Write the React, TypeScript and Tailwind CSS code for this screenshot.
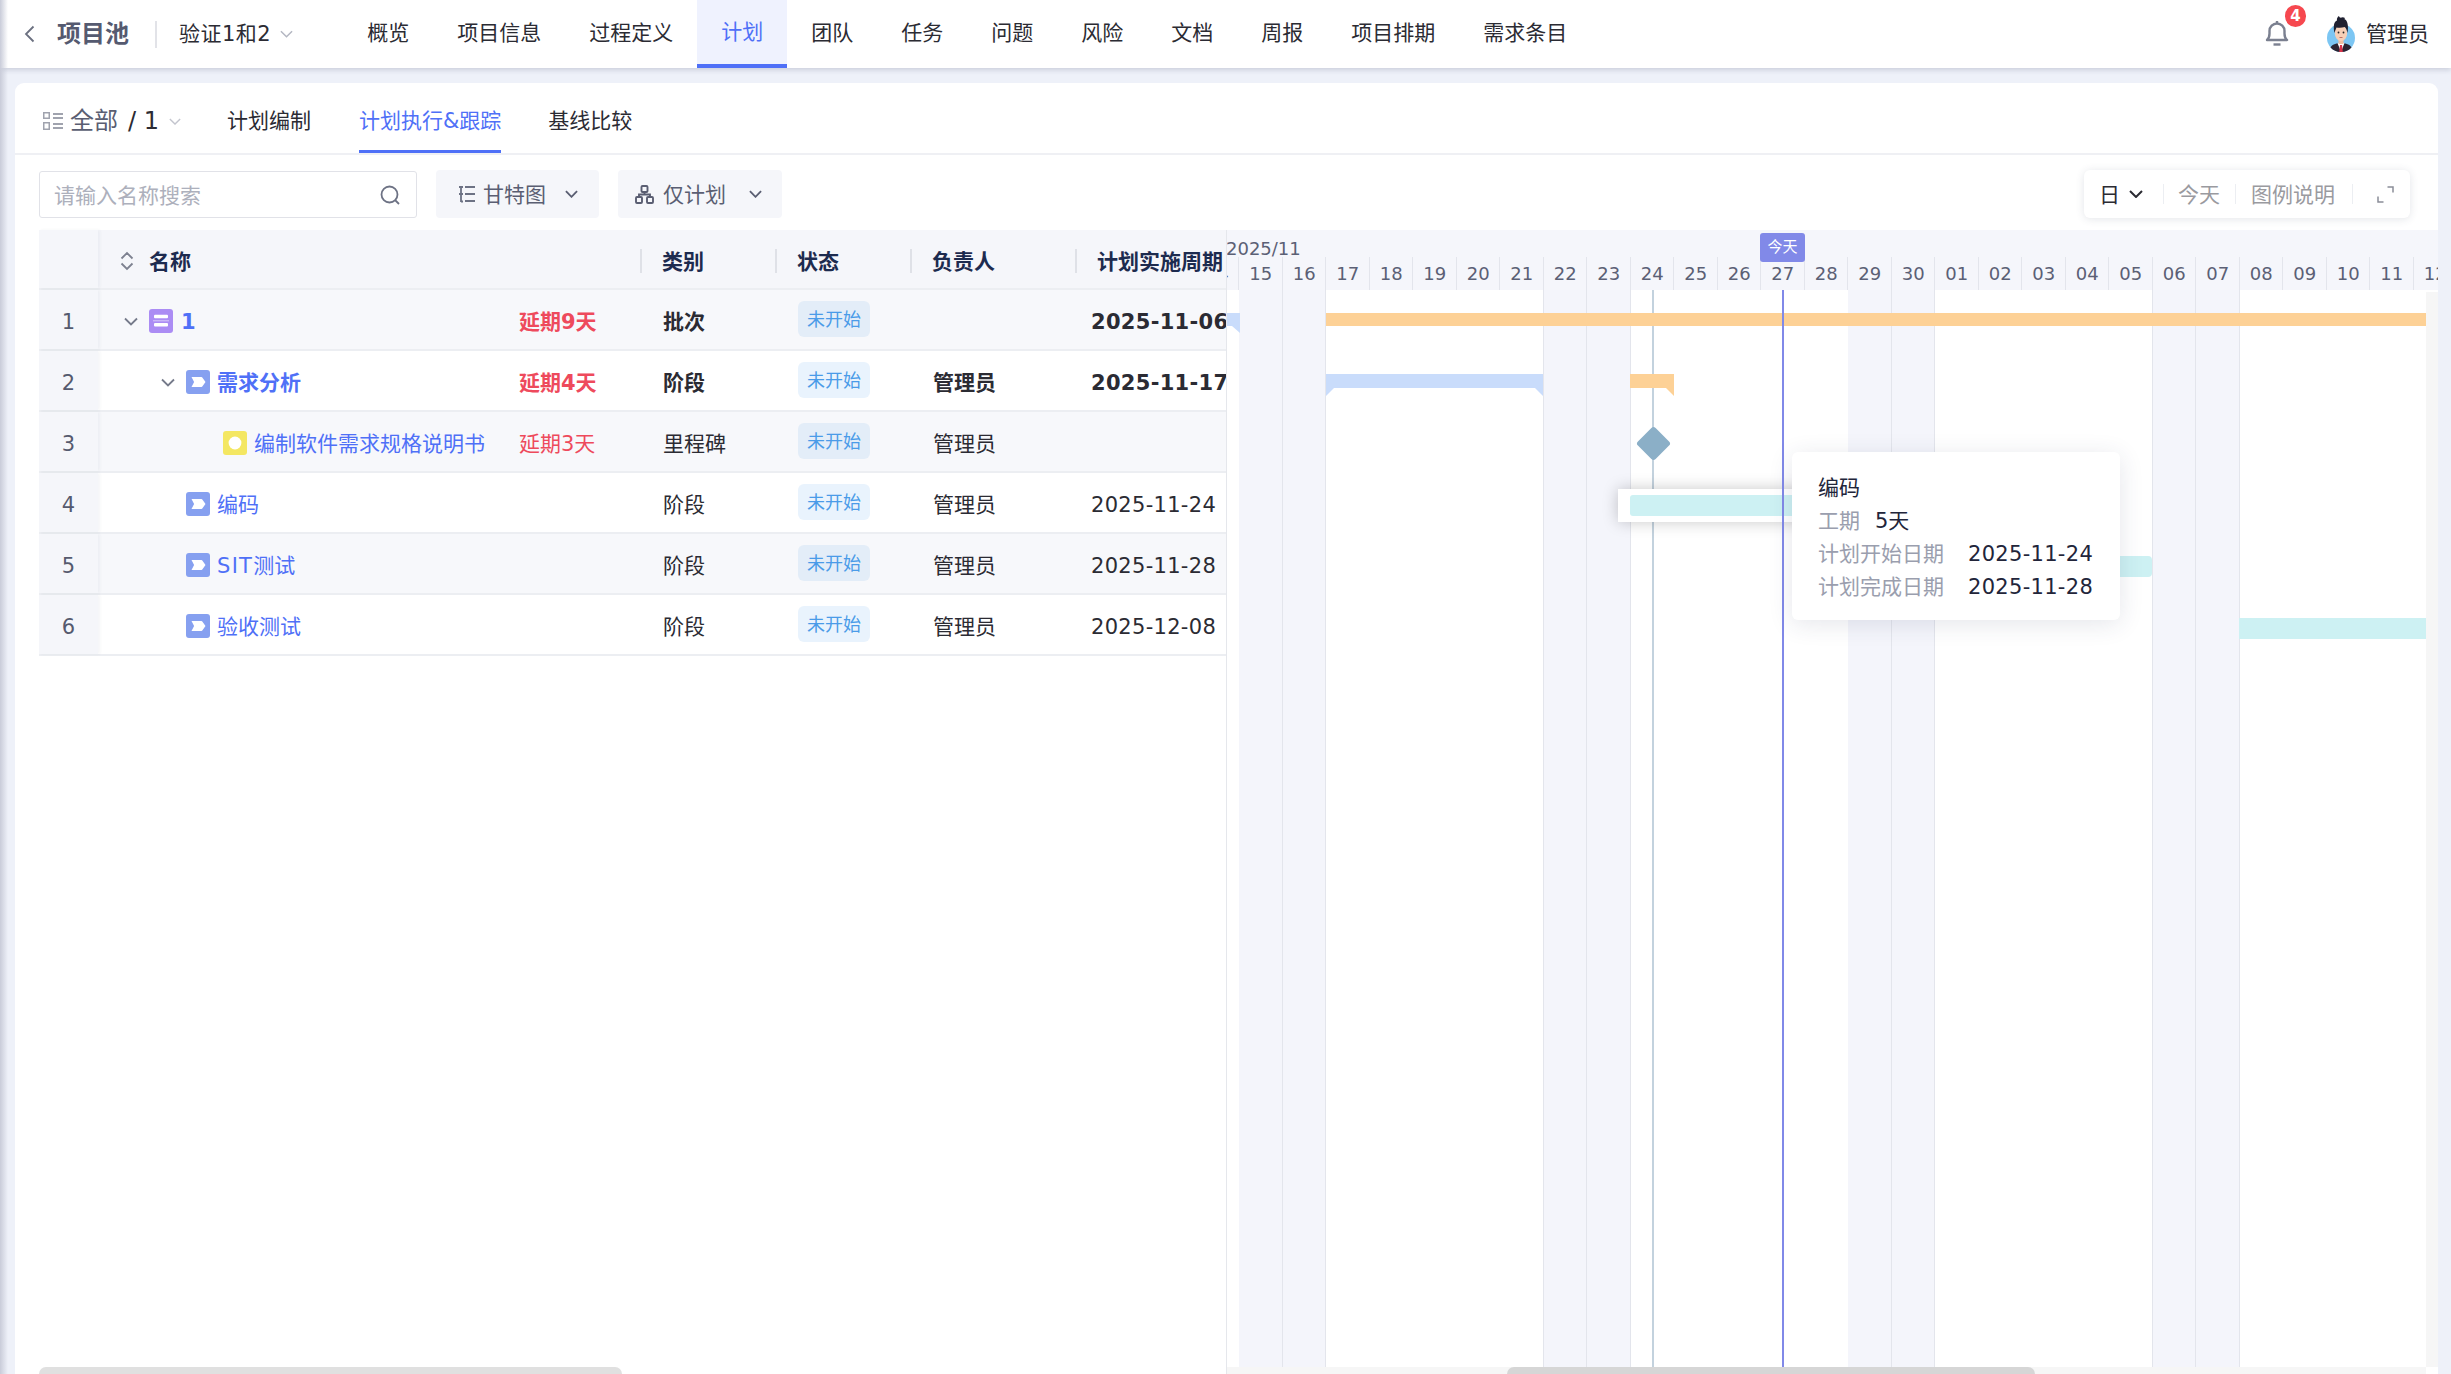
import React from "react";

const Chevron = ({ className = "", stroke = "#b4b7c2", sw = "1.6" }: { className?: string; stroke?: string; sw?: string }) => (
  <svg viewBox="0 0 14 8" className={className} fill="none" stroke={stroke} strokeWidth={sw}>
    <path d="M1 1l6 6 6-6" />
  </svg>
);

const navItems = ["概览", "项目信息", "过程定义", "计划", "团队", "任务", "问题", "风险", "文档", "周报", "项目排期", "需求条目"];

const days = ["14","15","16","17","18","19","20","21","22","23","24","25","26","27","28","29","30","01","02","03","04","05","06","07","08","09","10","11","12"];
const weekend = ["15","16","22","23","29","30","06","07"];

type Row = {
  n: number; pad: string; chev: boolean; icon: "purple" | "blue" | "yellow"; name: string;
  delay: string; type: string; owner: string; date: string; bold: boolean;
};
const rows: Row[] = [
  { n: 1, pad: "pl-[25px]", chev: true, icon: "purple", name: "1", delay: "延期9天", type: "批次", owner: "", date: "2025-11-06", bold: true },
  { n: 2, pad: "pl-[62px]", chev: true, icon: "blue", name: "需求分析", delay: "延期4天", type: "阶段", owner: "管理员", date: "2025-11-17", bold: true },
  { n: 3, pad: "pl-[99px]", chev: false, icon: "yellow", name: "编制软件需求规格说明书", delay: "延期3天", type: "里程碑", owner: "管理员", date: "", bold: false },
  { n: 4, pad: "pl-[62px]", chev: false, icon: "blue", name: "编码", delay: "", type: "阶段", owner: "管理员", date: "2025-11-24", bold: false },
  { n: 5, pad: "pl-[62px]", chev: false, icon: "blue", name: "SIT测试", delay: "", type: "阶段", owner: "管理员", date: "2025-11-28", bold: false },
  { n: 6, pad: "pl-[62px]", chev: false, icon: "blue", name: "验收测试", delay: "", type: "阶段", owner: "管理员", date: "2025-12-08", bold: false },
];

const RowIcon = ({ kind }: { kind: Row["icon"] }) => {
  if (kind === "purple")
    return (
      <svg viewBox="0 0 24 24" className="w-[24px] h-[24px] shrink-0">
        <rect width="24" height="24" rx="3" fill="#ab8cf4" />
        <rect x="5" y="5.700" width="14" height="3.600" rx="1" fill="#fff" />
        <rect x="5" y="14" width="14" height="3.600" rx="1" fill="#fff" />
        <rect x="4" y="11.300" width="16" height="1" fill="#d8c9fa" />
      </svg>
    );
  if (kind === "yellow")
    return (
      <svg viewBox="0 0 24 24" className="w-[24px] h-[24px] shrink-0">
        <rect width="24" height="24" rx="3" fill="#f4e762" />
        <circle cx="12" cy="12" r="6.400" fill="#fff" />
      </svg>
    );
  return (
    <svg viewBox="0 0 24 24" className="w-[24px] h-[24px] shrink-0">
      <rect width="24" height="24" rx="3" fill="#86a0f0" />
      <path d="M5.500 7h10a1 1 0 0 1 .8.4L19.500 12l-3.200 4.600a1 1 0 0 1-.8.4h-10l2.600-5z" fill="#fff" />
    </svg>
  );
};

function Nav() {
  return (
    <div className="relative z-10 h-[68px] shrink-0 bg-white flex items-center shadow-[0_2px_5px_rgba(40,50,90,0.18)]">
      <svg viewBox="0 0 12 18" className="w-[12px] h-[18px] ml-[23px]" fill="none" stroke="#6b7080" strokeWidth="1.800">
        <path d="M10.500 1.500L3 9l7.500 7.500" />
      </svg>
      <div className="ml-[22px] text-[24px] font-bold text-[#555a70] leading-none">项目池</div>
      <div className="ml-[26px] w-[2px] h-[27px] bg-[#e2e3e8]" />
      <div className="ml-[22px] text-[21px] text-[#2b2b33] leading-none tracking-[0.5px]">验证1和2</div>
      <Chevron className="ml-[9px] w-[13px] h-[8px]" />
      <div className="ml-[50px] flex h-full">
        {navItems.map((t) =>
          t === "计划" ? (
            <div key={t} className="px-[24px] h-full flex items-center bg-[#eff2fe] border-b-[4px] border-[#4f70f7] text-[21px] text-[#4f70f7] pt-[2px]">
              {t}
            </div>
          ) : (
            <div key={t} className="px-[24px] h-full flex items-center text-[21px] text-[#2b2b33]">
              {t}
            </div>
          )
        )}
      </div>
      <div className="ml-auto flex items-center pr-[22px]">
        <div className="relative w-[26px] h-[28px]">
          <svg viewBox="0 0 24 26" className="w-[24px] h-[26px]" fill="none" stroke="#7b8090" strokeWidth="2.400">
            <path d="M2 20c1.800-1.500 2.500-3.500 2.500-6.500V11a7.500 7.500 0 0 1 15 0v2.500c0 3 .7 5 2.500 6.500z" strokeLinejoin="round" />
            <path d="M12 1v2.500" />
            <path d="M8.500 24.500h7" />
          </svg>
          <div className="absolute left-[20px] top-[-15px] w-[21px] h-[22px] rounded-full bg-[#f6484f] text-white text-[15px] font-bold flex items-center justify-center leading-none">4</div>
        </div>
        <svg viewBox="0 0 28 36" className="ml-[36px] w-[28px] h-[36px]">
          <circle cx="14" cy="22" r="14" fill="#7cc6f3" />
          <path d="M3.500 31.500C5 28.500 9 27 14 27s9 1.500 10.500 4.500A14 14 0 0 1 14 36a14 14 0 0 1-10.500-4.500z" fill="#2c2533" />
          <path d="M10.500 27h7L14 36z" fill="#fff" />
          <path d="M13 29h2l.8 7h-3.600z" fill="#d8344a" />
          <rect x="11.500" y="22" width="5" height="6" fill="#efbfa3" />
          <ellipse cx="14" cy="17" rx="6.200" ry="8" fill="#f6cfb6" />
          <path d="M7.500 17C6 10 7 5.500 10 4.500 9.500 2.500 10.500 1 12 0c.3 1 .8 1.500 1.800 1.800C15 1 16.500 1 18 2c-.5.500-.6.800-.4 1.200 2.900 1 4.200 7 2.900 13.800-.5-2.500-1.300-5-2.800-6-2.700.8-6 .8-8.200.4-.9 1.800-1.500 3.600-2 5.600z" fill="#1f2030" />
          <circle cx="11.500" cy="16.500" r=".9" fill="#222" />
          <circle cx="16.500" cy="16.500" r=".9" fill="#222" />
          <path d="M12.500 21.500h3" stroke="#b2554e" strokeWidth=".8" />
        </svg>
        <div className="ml-[11px] text-[21px] text-[#2b2b33] leading-none">管理员</div>
      </div>
    </div>
  );
}

function SubTabs() {
  return (
    <div className="h-[72px] shrink-0 border-b-[2px] border-[#eff0f4] flex items-center">
      <svg viewBox="0 0 20 18" className="ml-[28px] w-[20px] h-[18px] mt-[6px]" fill="#a0a3ae">
        <path d="M0 0h7v7H0zM1.500 1.500v4h4v-4z" fillRule="evenodd" />
        <path d="M0 10h7v8H0zM1.500 11.500v5h4v-5z" fillRule="evenodd" />
        <rect x="10" y="1" width="10" height="2" />
        <rect x="10" y="5" width="10" height="2" />
        <rect x="10" y="11" width="10" height="2" />
        <rect x="10" y="15" width="10" height="2" />
      </svg>
      <div className="ml-[7px] text-[24px] text-[#5a5e72] leading-none pt-[6px]">全部<span className="text-[#2b2b33] ml-[10px]">/ 1</span></div>
      <Chevron className="ml-[10px] mt-[6px] w-[12px] h-[7px]" stroke="#c3c5ce" />
      <div className="ml-[46px] text-[21px] text-[#2b2b33] leading-none pt-[6px]">计划编制</div>
      <div className="ml-[48px] h-full flex items-center relative text-[21px] text-[#4f70f7] leading-none border-b-[3px] border-[#4f70f7] pt-[9px]">计划执行&amp;跟踪</div>
      <div className="ml-[47px] text-[21px] text-[#2b2b33] leading-none pt-[6px]">基线比较</div>
    </div>
  );
}

function Toolbar() {
  return (
    <div className="h-[75px] shrink-0 pt-[15px] pl-[24px] pr-[28px] flex items-start">
      <div className="w-[378px] h-[47px] mt-[1px] border border-[#e1e2e8] rounded-[3px] flex items-center pl-[14px] pr-[16px] justify-between">
        <span className="text-[21px] text-[#adb0bc] leading-none pt-[3px]">请输入名称搜索</span>
        <svg viewBox="0 0 20 20" className="w-[20px] h-[20px]" fill="none" stroke="#6d7284" strokeWidth="1.800">
          <circle cx="9.500" cy="9.500" r="8" />
          <path d="M15 15l4 4" />
        </svg>
      </div>
      <div className="ml-[19px] w-[163px] h-[48px] rounded-[4px] bg-[#f5f6fa] flex items-center pl-[23px]">
        <svg viewBox="0 0 16 18" className="w-[16px] h-[18px]" fill="none" stroke="#6d7284" strokeWidth="1.800">
          <path d="M2 1v16M2 16.500h2M6 2h10M6 9h10M6 16h10M0 2h4M0 9h4" />
        </svg>
        <span className="ml-[8px] text-[21px] text-[#5a5e72] leading-none pt-[3px]">甘特图</span>
        <Chevron className="ml-[19px] w-[13px] h-[8px]" stroke="#5a5e72" sw="2" />
      </div>
      <div className="ml-[19px] w-[164px] h-[48px] rounded-[4px] bg-[#f5f6fa] flex items-center pl-[17px]">
        <svg viewBox="0 0 19 19" className="w-[19px] h-[19px]" fill="none" stroke="#5a5e72" strokeWidth="1.900">
          <rect x="6.500" y="1" width="6" height="6" rx="1" />
          <rect x="1" y="12" width="6" height="6" rx="1" />
          <rect x="12" y="12" width="6" height="6" rx="1" />
          <path d="M9.500 7v2.500M4 12V9.500h11V12" />
        </svg>
        <span className="ml-[9px] text-[21px] text-[#5a5e72] leading-none pt-[3px]">仅计划</span>
        <Chevron className="ml-[23px] w-[13px] h-[8px]" stroke="#5a5e72" sw="2" />
      </div>
      <div className="ml-auto w-[326px] h-[48px] rounded-[6px] bg-white shadow-[0_1px_8px_rgba(60,70,100,0.14)] flex items-center pl-[15px]">
        <span className="text-[21px] text-[#2b2b33] leading-none pt-[3px]">日</span>
        <Chevron className="ml-[9px] w-[14px] h-[8px]" stroke="#2b2b33" sw="2" />
        <div className="ml-[20px] w-px h-[20px] bg-[#eceef2]" />
        <span className="ml-[14px] text-[21px] text-[#9a9a9f] leading-none pt-[3px]">今天</span>
        <div className="ml-[15px] w-px h-[20px] bg-[#eceef2]" />
        <span className="ml-[15px] text-[21px] text-[#9a9a9f] leading-none pt-[3px]">图例说明</span>
        <div className="ml-[17px] w-px h-[20px] bg-[#eceef2]" />
        <svg viewBox="0 0 17 17" className="ml-[24px] w-[17px] h-[17px]" fill="none" stroke="#8a8d98" strokeWidth="1.500">
          <path d="M10.500 1H16v5.500M1 10.500V16h5.500" />
        </svg>
      </div>
    </div>
  );
}

function Table() {
  return (
    <div className="w-[1187px] shrink-0 flex flex-col">
      <div className="h-[60px] flex bg-[#f5f6fa] border-b-[2px] border-[#eceef2] text-[21px] font-bold text-[#1d2b4f] leading-none">
        <div className="w-[59px] shadow-[2px_0_3px_rgba(40,50,90,0.05)]" />
        <div className="w-[542px] flex items-center pl-[22px] pt-[4px]">
          <svg viewBox="0 0 14 20" className="w-[14px] h-[20px]" fill="none" stroke="#7d8190" strokeWidth="1.800">
            <path d="M1.500 7.500L7 2l5.500 5.500M1.500 12.500L7 18l5.500-5.500" />
          </svg>
          <span className="ml-[15px] pt-[2px]">名称</span>
        </div>
        <div className="w-[135px] flex items-center pt-[4px]"><div className="w-[2px] h-[24px] bg-[#dfe1e7]" /><span className="ml-[20px] pt-[2px]">类别</span></div>
        <div className="w-[135px] flex items-center pt-[4px]"><div className="w-[2px] h-[24px] bg-[#dfe1e7]" /><span className="ml-[20px] pt-[2px]">状态</span></div>
        <div className="w-[165px] flex items-center pt-[4px]"><div className="w-[2px] h-[24px] bg-[#dfe1e7]" /><span className="ml-[20px] pt-[2px]">负责人</span></div>
        <div className="w-[151px] flex items-center pt-[4px] whitespace-nowrap overflow-hidden"><div className="w-[2px] h-[24px] bg-[#dfe1e7] shrink-0" /><span className="ml-[20px] pt-[2px]">计划实施周期</span></div>
      </div>
      {rows.map((r) => {
        const odd = r.n % 2 === 1;
        return (
          <div key={r.n} className={`h-[61px] flex border-b-[2px] border-[#eceef2] text-[21px] leading-none ${odd ? "bg-[#f7f8fb]" : "bg-white"} ${r.bold ? "font-bold" : "font-normal"}`}>
            <div className="w-[59px] flex items-center justify-center pt-[6px] bg-[#f5f6fa] text-[#555a6e] font-normal shadow-[2px_0_3px_rgba(40,50,90,0.05)]">{r.n}</div>
            <div className={`w-[542px] flex items-center pt-[3px] ${r.pad}`}>
              <div className="w-[26px] shrink-0 flex items-center">
                {r.chev && <Chevron className="w-[14px] h-[9px] ml-[1px]" stroke="#757a8a" sw="1.800" />}
              </div>
              <RowIcon kind={r.icon} />
              <span className={`pt-[3px] text-[#4f70f7] flex-1 whitespace-nowrap ${r.n === 1 ? "ml-[8px]" : "ml-[7px]"}`}>
                {r.name === "SIT测试" ? (
                  <>
                    <span className="tracking-[1.300px]">SIT</span>测试
                  </>
                ) : (
                  r.name
                )}
              </span>
              <span className="pt-[3px] w-[121px] text-[#ee4a5c] shrink-0">{r.delay}</span>
            </div>
            <div className="w-[135px] flex items-center pl-[23px] pt-[6px] text-[#2b2b33]">{r.type}</div>
            <div className="w-[135px] pl-[23px] pt-[11px]">
              <div className={`w-[72px] h-[36px] rounded-[6px] flex items-center justify-center pt-[2px] text-[18px] font-normal text-[#4a9be8] ${odd ? "bg-[#e3edf8]" : "bg-[#e9f3fd]"}`}>未开始</div>
            </div>
            <div className="w-[165px] flex items-center pl-[23px] pt-[6px] text-[#2b2b33]">{r.owner}</div>
            <div className="w-[151px] flex items-center pl-[16px] pt-[6px] text-[#2b2b33] overflow-hidden whitespace-nowrap tracking-[0.3px]">{r.date}</div>
          </div>
        );
      })}
      <div className="flex-1" />
      <div className="h-[7px] shrink-0">
        <div className="w-[583px] h-[7px] bg-[#e0e0e0] rounded-t-[7px]" />
      </div>
    </div>
  );
}

function Gantt() {
  return (
    <div className="flex-1 min-w-0 flex flex-col border-l border-[#e5e7ec] overflow-hidden">
      <div className="h-[60px] shrink-0 bg-[#f5f6fb] relative">
        <div className="h-[27px] ml-[-1px] text-[18px] text-[#5b6075] leading-[38px] whitespace-nowrap">2025/11</div>
        <div className="h-[33px] flex ml-[-31.500px]">
          {days.map((d, i) => (
            <div key={i} className="w-[43.500px] shrink-0 border-r border-[#e3e5ec] flex items-center justify-center pl-[1px] text-[18px] text-[#5b6075] leading-none">{d}</div>
          ))}
        </div>
        <div className="absolute left-[533px] top-[3px] w-[45px] h-[29px] rounded-[3px] bg-[#8189e8] text-white text-[15px] flex items-center justify-center leading-none">今天</div>
      </div>
      <div className="flex-1 min-h-0 relative overflow-hidden">
        <div className="flex h-full ml-[-31.500px]">
          {days.map((d, i) => (
            <div key={i} className={`w-[43.500px] shrink-0 ${weekend.includes(d) ? "bg-[#f4f5fb] border-r border-[#e3e5ec]" : ["21", "05"].includes(d) ? "border-r border-[#e3e5ec]" : ""}`} />
          ))}
        </div>
        {/* marker line */}
        <div className="absolute left-[425px] top-0 bottom-0 w-[2px] bg-[#c3d2de]" />
        {/* row 1 */}
        <svg viewBox="0 0 13 20" className="absolute left-0 top-[23px] w-[13px] h-[20px]"><polygon points="0,0 13,0 13,20 5,13 0,13" fill="#c9dcfb" /></svg>
        <div className="absolute left-[99px] top-[23px] w-[1100px] h-[13px] bg-[#fdd196]" />
        {/* row 2 */}
        <svg viewBox="0 0 217 22" className="absolute left-[99px] top-[84px] w-[217px] h-[22px]"><polygon points="0,0 217,0 217,22 209,14 8,14 0,22" fill="#c9dcfb" /></svg>
        <svg viewBox="0 0 44 22" className="absolute left-[403px] top-[84px] w-[44px] h-[22px]"><polygon points="0,0 44,0 44,22 36,14 0,14" fill="#fdd196" /></svg>
        {/* row 3 */}
        <div className="absolute left-[413.500px] top-[141px] w-[25px] h-[25px] rotate-45 rounded-[3px] bg-[#8bafc7]" />
        {/* row 4 */}
        <div className="absolute left-[391px] top-[199px] w-[200px] h-[33px] bg-white shadow-[0_0_16px_rgba(0,0,0,0.22)] flex items-center pl-[12px]">
          <div className="w-[188px] h-[21px] bg-[#cdf1f3] rounded-l-[3px]" />
        </div>
        {/* row 5 */}
        <div className="absolute left-[621px] top-[266px] w-[304px] h-[21px] bg-[#cdf1f3] rounded-r-[4px]" />
        {/* row 6 */}
        <div className="absolute left-[1012px] top-[328px] w-[187px] h-[21px] bg-[#cdf1f3]" />
        {/* today line */}
        <div className="absolute left-[555px] top-0 bottom-0 w-[2px] bg-[#8189e8]" />
        {/* gutter */}
        <div className="absolute left-[1199px] top-[2px] bottom-0 w-[12px] bg-[#f6f6f6]" />
        {/* tooltip */}
        <div className="absolute left-[565px] top-[162px] w-[328px] h-[168px] bg-white rounded-[6px] shadow-[0_4px_24px_rgba(40,50,90,0.12)] pt-[20px] pl-[26px] text-[21px] leading-[33px] text-[#22253a] whitespace-nowrap">
          <div>编码</div>
          <div><span className="text-[#9a9eae]">工期</span><span className="ml-[15px]">5天</span></div>
          <div><span className="text-[#9a9eae]">计划开始日期</span><span className="ml-[24px] tracking-[0.3px]">2025-11-24</span></div>
          <div><span className="text-[#9a9eae]">计划完成日期</span><span className="ml-[24px] tracking-[0.3px]">2025-11-28</span></div>
        </div>
      </div>
      <div className="h-[7px] shrink-0 bg-[#f6f6f6] w-[1199px]">
        <div className="ml-[280px] w-[528px] h-[7px] bg-[#d6d6d6] rounded-t-[7px]" />
      </div>
    </div>
  );
}

export default function App() {
  return (
    <div className="relative h-screen w-screen overflow-hidden flex flex-col bg-[#eef1f9] font-['DejaVu_Sans','Noto_Sans_CJK_SC',sans-serif]">
      <Nav />
      <div className="flex-1 min-h-0 mt-[15px] ml-[15px] mr-[13px] bg-white rounded-t-[9px] flex flex-col">
        <SubTabs />
        <Toolbar />
        <div className="flex-1 min-h-0 flex pl-[24px]">
          <Table />
          <Gantt />
        </div>
      </div>
      <div className="absolute left-0 top-0 bottom-0 w-[8px] z-20 bg-linear-to-r from-[#c9ccd9] to-transparent" />
    </div>
  );
}
